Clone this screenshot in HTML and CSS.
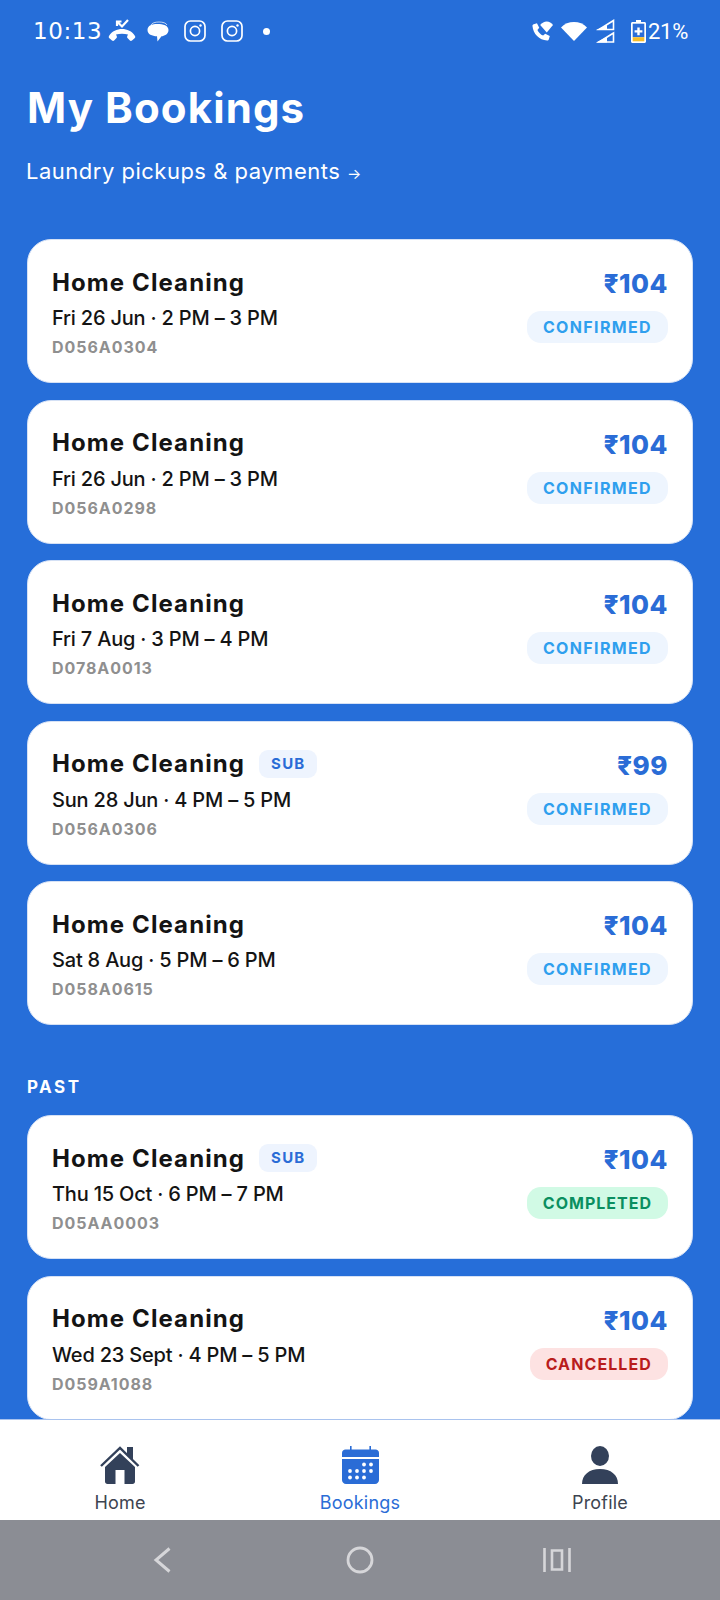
FILE: index.html
```html
<!DOCTYPE html>
<html>

<head>
  <title>My Bookings</title>
  <link rel="stylesheet" href="styles.css">
</head>

<body>
  <div class="screen">
    <div class="status-bar">
      <div class="status-left">
        <span class="clock">10:13</span>
        <svg class="st-call" viewBox="0 0 28 24" width="28" height="24">
          <path fill="#fff" d="M1 17c3-5 8-7 13-7s10 2 13 7c.5 1 .3 1.700-.4 2.300l-2.600 2.300c-.7.600-1.500.600-2.100 0l-2.400-2.500c-.5-.5-.6-1.100-.3-1.800l.8-1.700c-3.700-1.300-8.300-1.300-12 0l.8 1.700c.3.700.2 1.300-.3 1.800l-2.400 2.500c-.6.600-1.400.600-2.100 0l-2.600-2.300c-.7-.6-.9-1.300-.4-2.300z" />
          <path fill="none" stroke="#fff" stroke-width="2.200" d="M20 1l-6 6.500-5-5M9 7V2.500h4.500" />
        </svg>
        <svg class="st-bubble" viewBox="0 0 22 21" width="22" height="21">
          <path fill="none" stroke="#fff" stroke-width="1" opacity=".7" d="M4 4c1-2 4-3 8-3 4 0 7 1 8 3" />
          <path fill="#fff" d="M10.500 3C16 3 21.500 4.500 21.500 9S17 15 14.500 15.300L10.500 20.500 10 15.300C5 15 .5 13.500.5 9S5 3 10.500 3z" />
        </svg>
        <svg class="st-insta" viewBox="0 0 22 22" width="22" height="22">
          <rect x="1" y="1" width="20" height="20" rx="5.500" fill="none" stroke="#fff" stroke-width="1.700" />
          <circle cx="11" cy="11" r="4.600" fill="none" stroke="#fff" stroke-width="1.700" />
          <circle cx="16.500" cy="5.500" r="1.200" fill="#fff" />
        </svg>
        <svg class="st-insta" viewBox="0 0 22 22" width="22" height="22">
          <rect x="1" y="1" width="20" height="20" rx="5.500" fill="none" stroke="#fff" stroke-width="1.700" />
          <circle cx="11" cy="11" r="4.600" fill="none" stroke="#fff" stroke-width="1.700" />
          <circle cx="16.500" cy="5.500" r="1.200" fill="#fff" />
        </svg>
        <span class="st-dot"></span>
      </div>
      <div class="status-right">
        <svg viewBox="0 0 24 24" width="22" height="22">
          <path fill="#fff" d="M3 4.500 6.500 3.500 9 8.500 7 10.800c1.200 2.700 3.500 5 6.200 6.200L15.500 15l5 2.500-1 3.500c-.3 1-1 1.500-2 1.400C9 21.800 2.300 15 1.600 6.500 1.500 5.500 2 4.800 3 4.500z" />
          <path fill="#fff" d="M10 5.500C12 3 14.500 1.600 17.200 1.600S22.300 3 24 5.500L17.200 13.500z" />
        </svg>
        <svg class="st-wifi" viewBox="0 0 26 20" width="26" height="20">
          <path fill="#fff" d="M0 6.500C3.500 2.800 8 1 13 1s9.500 1.800 13 5.500L13 20z" />
        </svg>
        <svg class="st-signal" viewBox="0 0 20 24" width="20" height="24">
          <path fill="none" stroke="#fff" stroke-width="1.600" d="M18.500 1.500V10.500H4z" />
          <path fill="#fff" d="M1 11 12 6v5z" />
          <path fill="none" stroke="#fff" stroke-width="1.600" d="M18.500 14V23H4z" />
          <path fill="#fff" d="M1 23.500 12 18v5.500z" />
        </svg>
        <svg class="st-battery" viewBox="0 0 15 23" width="15" height="23">
          <path fill="#fff" d="M5 0h5v2h3.500c.8 0 1.500.7 1.500 1.500V21.500c0 .8-.7 1.500-1.500 1.500h-12C.7 23 0 22.300 0 21.500V3.500C0 2.700.7 2 1.500 2H5z" />
          <rect x="1.700" y="3.700" width="11.600" height="13.500" fill="#2a6dd8" />
          <rect x="1.700" y="17.200" width="11.600" height="4.100" fill="#f6bd2a" />
          <path fill="#fff" d="M6.300 7.500h2.400v2.700h2.700v2.400H8.700v2.700H6.300v-2.700H3.600v-2.400h2.700z" />
        </svg>
        <span class="st-pct">21%</span>
      </div>
    </div>

    <div class="content">
      <div class="head">
        <h1 class="title">My Bookings</h1>
        <p class="subtitle">Laundry pickups &amp; payments <span class="sub-arrow">→</span></p>
      </div>

      <div class="list">
        <div class="card">
          <div class="card-left">
            <div class="name-row"><span class="name">Home Cleaning</span></div>
            <div class="when">Fri 26 Jun · 2 PM – 3 PM</div>
            <div class="code">D056A0304</div>
          </div>
          <div class="card-right">
            <div class="price">₹104</div>
            <span class="badge confirmed">CONFIRMED</span>
          </div>
        </div>
        <div class="card">
          <div class="card-left">
            <div class="name-row"><span class="name">Home Cleaning</span></div>
            <div class="when">Fri 26 Jun · 2 PM – 3 PM</div>
            <div class="code">D056A0298</div>
          </div>
          <div class="card-right">
            <div class="price">₹104</div>
            <span class="badge confirmed">CONFIRMED</span>
          </div>
        </div>
        <div class="card">
          <div class="card-left">
            <div class="name-row"><span class="name">Home Cleaning</span></div>
            <div class="when">Fri 7 Aug · 3 PM – 4 PM</div>
            <div class="code">D078A0013</div>
          </div>
          <div class="card-right">
            <div class="price">₹104</div>
            <span class="badge confirmed">CONFIRMED</span>
          </div>
        </div>
        <div class="card">
          <div class="card-left">
            <div class="name-row"><span class="name">Home Cleaning</span><span class="sub-tag">SUB</span></div>
            <div class="when">Sun 28 Jun · 4 PM – 5 PM</div>
            <div class="code">D056A0306</div>
          </div>
          <div class="card-right">
            <div class="price">₹99</div>
            <span class="badge confirmed">CONFIRMED</span>
          </div>
        </div>
        <div class="card">
          <div class="card-left">
            <div class="name-row"><span class="name">Home Cleaning</span></div>
            <div class="when">Sat 8 Aug · 5 PM – 6 PM</div>
            <div class="code">D058A0615</div>
          </div>
          <div class="card-right">
            <div class="price">₹104</div>
            <span class="badge confirmed">CONFIRMED</span>
          </div>
        </div>
      </div>

      <div class="section-label">PAST</div>

      <div class="list">
        <div class="card">
          <div class="card-left">
            <div class="name-row"><span class="name">Home Cleaning</span><span class="sub-tag">SUB</span></div>
            <div class="when">Thu 15 Oct · 6 PM – 7 PM</div>
            <div class="code">D05AA0003</div>
          </div>
          <div class="card-right">
            <div class="price">₹104</div>
            <span class="badge completed">COMPLETED</span>
          </div>
        </div>
        <div class="card">
          <div class="card-left">
            <div class="name-row"><span class="name">Home Cleaning</span></div>
            <div class="when">Wed 23 Sept · 4 PM – 5 PM</div>
            <div class="code">D059A1088</div>
          </div>
          <div class="card-right">
            <div class="price">₹104</div>
            <span class="badge cancelled">CANCELLED</span>
          </div>
        </div>
      </div>
    </div>

    <div class="tabs">
      <div class="tab">
        <svg viewBox="0 0 40 38" width="40" height="38">
          <path fill="none" stroke="#33415a" stroke-width="2.400" d="M1 20 20 2l18.500 18" />
          <path fill="#33415a" d="M27 1h6v13.500l-6-5.500z" />
          <path fill="#33415a" fill-rule="evenodd" d="M20 7 35 21v14.500c0 1.400-1 2.500-2.500 2.500H7.500C6 38 5 36.900 5 35.500V21zM15.500 24v14h9V24z" />
        </svg>
        <span>Home</span>
      </div>
      <div class="tab active">
        <svg viewBox="0 0 37 38" width="37" height="38">
          <path fill="#2a6cd6" d="M8 0h1.600v3.500h17.800V0H29v3.500h4.500c2 0 3.500 1.500 3.500 3.500v4H0V7c0-2 1.500-3.500 3.500-3.500H8z" />
          <path fill="#2a6cd6" d="M0 13h37v21c0 2.200-1.800 4-4 4H4c-2.200 0-4-1.800-4-4z" />
          <g fill="#fff">
            <circle cx="22" cy="18.500" r="1.900" /><circle cx="29" cy="18.500" r="1.900" />
            <circle cx="8" cy="25" r="1.900" /><circle cx="15" cy="25" r="1.900" /><circle cx="22" cy="25" r="1.900" /><circle cx="29" cy="25" r="1.900" />
            <circle cx="8" cy="31.500" r="1.900" /><circle cx="15" cy="31.500" r="1.900" /><circle cx="22" cy="31.500" r="1.900" />
          </g>
        </svg>
        <span>Bookings</span>
      </div>
      <div class="tab">
        <svg viewBox="0 0 36 38" width="36" height="38">
          <ellipse cx="18" cy="10" rx="9" ry="10" fill="#33415a" />
          <path fill="#33415a" d="M0 38c0-9 7-15 18-15s18 6 18 15z" />
        </svg>
        <span>Profile</span>
      </div>
    </div>

    <div class="nav-bar">
      <svg viewBox="0 0 20 26" width="20" height="26">
        <path fill="none" stroke="#d6d6d9" stroke-width="3" d="M18.500 1.500 5 13l13.500 11.500" />
      </svg>
      <svg class="nav-home" viewBox="0 0 28 28" width="28" height="28">
        <circle cx="14" cy="14" r="12" fill="none" stroke="#d6d6d9" stroke-width="2.800" />
      </svg>
      <svg class="nav-recents" viewBox="0 0 28 26" width="28" height="26">
        <path fill="none" stroke="#d6d6d9" stroke-width="2.600" d="M1.500 1v24M26.500 1v24M9 3.500h10v19H9z" />
      </svg>
    </div>
  </div>
</body>

</html>
```

FILE: styles.css
```css
* {
  box-sizing: border-box;
}

body {
  margin: 0;
  font-family: Inter, "Noto Sans", sans-serif;
}

.screen {
  display: flex;
  flex-direction: column;
  width: 720px;
  height: 1600px;
  overflow: hidden;
  background: #266ed9;
}

.status-bar {
  display: flex;
  flex: none;
  justify-content: space-between;
  align-items: center;
  height: 62px;
  padding: 0 32px 0 33px;
  color: #fff;
}

.status-left,
.status-right {
  display: flex;
  align-items: center;
}

.clock {
  width: 75px;
  font-family: "DejaVu Sans", sans-serif;
  font-size: 23px;
  letter-spacing: 0.6px;
}

.st-bubble {
  margin-left: 11px;
}

.st-insta {
  margin-left: 15px;
}

.st-dot {
  width: 7px;
  height: 7px;
  margin-left: 20px;
  border-radius: 50%;
  background: #fff;
}

.st-wifi {
  margin-left: 8px;
}

.st-signal {
  margin-left: 8px;
}

.st-battery {
  margin-left: 16px;
}

.st-pct {
  margin-left: 2px;
  font-family: Roboto, sans-serif;
  font-size: 22px;
  letter-spacing: -0.3px;
}

.content {
  flex: 1;
  min-height: 0;
  overflow: hidden;
  padding: 0 27px;
}

.head {
  height: 177px;
  padding-top: 19px;
  color: #fff;
}

.title {
  margin: 0;
  font-size: 42px;
  font-weight: 700;
  line-height: 54px;
  letter-spacing: 1.100px;
}

.subtitle {
  margin: 21px 0 0 -1px;
  font-size: 22px;
  line-height: 30px;
  letter-spacing: 0.5px;
}

.sub-arrow {
  font-size: 15px;
}

.list {
  display: flex;
  flex-direction: column;
  gap: 16.500px;
}

.card {
  display: flex;
  flex: none;
  justify-content: space-between;
  height: 144px;
  padding: 26px 24px 0;
  border: 1px solid #d5e1f5;
  border-radius: 24px;
  background: #fff;
}

.name-row {
  display: flex;
  align-items: center;
  height: 32px;
}

.name {
  color: #141414;
  font-size: 24px;
  font-weight: 700;
  letter-spacing: 1.100px;
}

.sub-tag {
  margin-left: 14px;
  padding: 0 12px;
  border-radius: 9px;
  background: #eef4fe;
  color: #2a6cd6;
  font-size: 15px;
  font-weight: 700;
  line-height: 28px;
  letter-spacing: 1.200px;
}

.when {
  margin-top: 7px;
  color: #141414;
  font-size: 20px;
  font-weight: 500;
  line-height: 26px;
  letter-spacing: -0.2px;
}

.code {
  margin-top: 6px;
  color: #8f8f8f;
  font-size: 16px;
  font-weight: 700;
  line-height: 20px;
  letter-spacing: 0.950px;
}

.card-right {
  display: flex;
  flex-direction: column;
  align-items: flex-end;
}

.price {
  margin-bottom: 9px;
  color: #2a6cd6;
  font-size: 26px;
  font-weight: 800;
  line-height: 36px;
  letter-spacing: 0.5px;
}

.badge {
  padding: 0 16px;
  border-radius: 14px;
  font-size: 16px;
  font-weight: 700;
  line-height: 32px;
  letter-spacing: 1.350px;
}

.confirmed {
  background: #eef5fe;
  color: #2f9fee;
}

.completed {
  background: #d1fae5;
  color: #0a8f60;
  letter-spacing: 1px;
}

.cancelled {
  background: #fde2e2;
  color: #b91c1c;
  letter-spacing: 1.100px;
}

.section-label {
  height: 24px;
  margin-top: 50px;
  margin-bottom: 16px;
  color: #fff;
  font-size: 17px;
  font-weight: 700;
  line-height: 24px;
  letter-spacing: 2.500px;
}

.tabs {
  display: flex;
  flex: none;
  height: 101px;
  border-top: 1px solid #a9c3ee;
  background: #fff;
}

.tab {
  display: flex;
  flex: 1;
  flex-direction: column;
  align-items: center;
  padding-top: 26px;
  color: #3d4450;
  font-size: 18px;
  letter-spacing: 0.2px;
}

.tab span {
  margin-top: 7px;
  line-height: 24px;
}

.tab.active {
  color: #2a6cd6;
}

.nav-bar {
  display: flex;
  flex: none;
  align-items: center;
  height: 80px;
  padding-left: 151px;
  background: #8b8d94;
}

.nav-home {
  margin-left: 175px;
}

.nav-recents {
  margin-left: 169px;
}
```
